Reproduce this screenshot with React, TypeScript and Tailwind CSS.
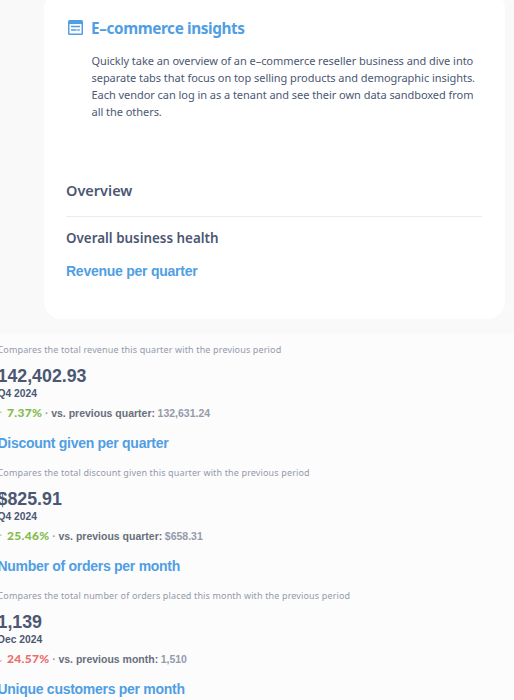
type Metric = {
  title: string;
  description: string;
  value: string;
  period: string;
  change: string;
  up: boolean;
  label: string;
  previous: string;
};

const METRICS: Metric[] = [
  {
    title: "Discount given per quarter",
    description: "Compares the total revenue this quarter with the previous period",
    value: "142,402.93",
    period: "Q4 2024",
    change: "7.37%",
    up: true,
    label: "vs. previous quarter:",
    previous: "132,631.24",
  },
  {
    title: "Number of orders per month",
    description: "Compares the total discount given this quarter with the previous period",
    value: "$825.91",
    period: "Q4 2024",
    change: "25.46%",
    up: true,
    label: "vs. previous quarter:",
    previous: "$658.31",
  },
  {
    title: "Unique customers per month",
    description: "Compares the total number of orders placed this month with the previous period",
    value: "1,139",
    period: "Dec 2024",
    change: "24.57%",
    up: false,
    label: "vs. previous month:",
    previous: "1,510",
  },
];

const INTRO = [
  "Quickly take an overview of an e–commerce reseller business and dive into",
  "separate tabs that focus on top selling products and demographic insights.",
  "Each vendor can log in as a tenant and see their own data sandboxed from",
  "all the others.",
];

function DashboardIcon() {
  return (
    <svg width="15" height="15" viewBox="0 0 15 15" className="shrink-0">
      <rect width="15" height="15" rx="1.6" fill="#509ee3" />
      <rect x="1.5" y="4" width="12" height="9.5" fill="#fff" />
      <path d="M3 6.5h9M3 10h5.5M9.3 10h2.4" stroke="#509ee3" strokeWidth="1.5" />
    </svg>
  );
}

function MetricBlock({ metric }: { metric: Metric }) {
  const changeColor = metric.up ? "text-[#84bb4c]" : "text-[#ed6e6e]";

  return (
    <section className="h-[123px] whitespace-nowrap">
      <p className="h-[32px] pt-2 font-['Noto_Sans','Open_Sans',sans-serif] text-[9px] leading-4 tracking-[0.14px] text-[#949aab]">
        {metric.description}
      </p>
      <p className="h-[21px] text-[17.8px] leading-5 font-bold text-[#4c5773]">{metric.value}</p>
      <p className="h-[14px] text-[10.3px] leading-[14px] font-bold text-[#4c5773]">{metric.period}</p>
      <p className="flex h-[24px] items-center text-[10.5px] leading-4 font-bold">
        <span className={`w-[9.5px] shrink-0 ${changeColor}`}>
          <svg width="5" height="7" viewBox="0 0 5 7" fill="none" stroke="currentColor" strokeWidth="0.9" className="-ml-[1px]">
            {metric.up ? <path d="M2.5 7V1M.5 3 2.5 1l2 2" /> : <path d="M2.5 0v6M.5 4l2 2 2-2" />}
          </svg>
        </span>
        <span className={`font-['Lato',sans-serif] text-[12px] font-black tracking-[0.3px] ${changeColor}`}>{metric.change}</span>
        <span className="w-[9px] text-center text-[#949aab]">·</span>
        <span className="text-[#696e7b]">{metric.label}</span>
        <span className="ml-[2.5px] text-[#949aab]">{metric.previous}</span>
      </p>
      <h3 className="h-[32px] pt-[8px] text-[14px] leading-5 font-bold tracking-[-0.28px] text-[#509ee3]">{metric.title}</h3>
    </section>
  );
}

export default function App() {
  return (
    <div className="h-[700px] w-[514px] overflow-hidden bg-[#f9f9f9] font-['Liberation_Sans',Arial,sans-serif]">
      <main className="ml-[44px] h-[319px] w-[461px] overflow-hidden">
        <div className="-mt-[9px] h-[328px] rounded-[18px] bg-white pt-[26px] pr-[23px] pl-[22px] font-['Noto_Sans','Open_Sans',sans-serif] whitespace-nowrap text-[#4c5773]">
          <header className="flex h-[20px] items-center pl-[2px]">
            <DashboardIcon />
            <h1 className="mt-[1px] ml-[8px] text-[15.3px] leading-5 font-bold tracking-[-0.38px] text-[#509ee3]">E–commerce insights</h1>
          </header>
          <div className="mt-[15px] h-[118px] pl-[25.5px] text-[11px] leading-[17px] tracking-[-0.045px]">
            {INTRO.map((line) => (
              <p key={line}>{line}</p>
            ))}
          </div>
          <h2 className="h-[47px] border-b border-[#eeecec] pt-[10px] text-[14.5px] leading-5 font-semibold">Overview</h2>
          <p className="mt-[11px] text-[13.4px] leading-5 font-semibold">Overall business health</p>
          <h3 className="mt-[13px] font-['Liberation_Sans',Arial,sans-serif] text-[14px] leading-5 font-bold tracking-[-0.25px] text-[#509ee3]">
            Revenue per quarter
          </h3>
        </div>
      </main>

      {/* Metric feed, scrolled slightly past its left edge */}
      <div className="mt-[15px] h-[366px] overflow-hidden bg-[#fcfcfc]">
        <div className="-ml-[2.5px]">
          {METRICS.map((metric) => (
            <MetricBlock key={metric.title} metric={metric} />
          ))}
        </div>
      </div>
    </div>
  );
}
